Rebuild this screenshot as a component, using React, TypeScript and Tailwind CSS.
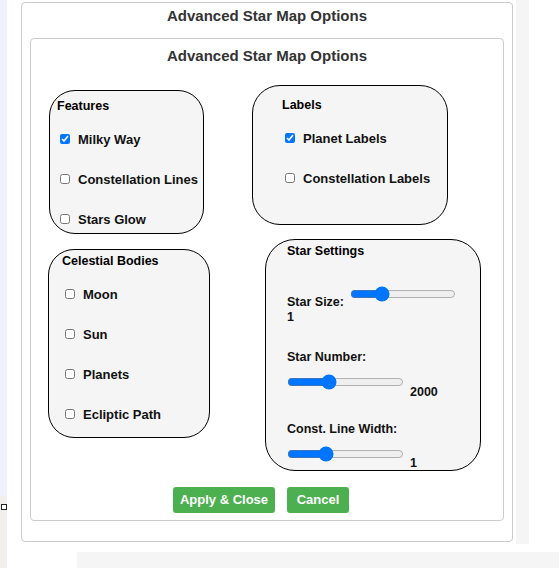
import React from "react";

const font = { fontFamily: '"Liberation Sans", Arial, sans-serif' };

function Check({ label, checked, pl }: { label: string; checked?: boolean; pl: string }) {
  return (
    <label className={`flex items-center h-[40px] ${pl}`}>
      <input
        type="checkbox"
        defaultChecked={checked}
        className="w-[10px] h-[10px] accent-[#0075ff]"
      />
      <span className="ml-[8px] text-[13px] font-bold leading-[15px] text-[#111]">{label}</span>
    </label>
  );
}

function Range({ min, max, value, width }: { min: number; max: number; value: number; width: string }) {
  return (
    <input
      type="range"
      min={min}
      max={max}
      step="any"
      defaultValue={value}
      className={`${width} h-[16px] accent-[#0075ff]`}
    />
  );
}

export default function App() {
  return (
    <div className="w-[559px] h-[568px] bg-white flex overflow-hidden" style={font}>
      {/* left page strip */}
      <div className="w-[7px] flex flex-col shrink-0">
        <div className="h-[496px] bg-[#eef2fa]" />
        <div className="flex-1 bg-[#f1efeb] pt-[8px]">
          <div className="ml-[1px] w-[6px] h-[6px] border border-[#222] bg-white" />
        </div>
      </div>

      <div className="flex flex-col flex-1">
        <div className="flex">
          {/* outer dialog */}
          <div className="ml-[14px] mt-[2px] w-[492px] h-[540px] border border-[#ccc] rounded-[4px] bg-white">
            <div className="pt-[4px] text-center text-[15px] leading-[17px] font-bold text-[#333]">
              Advanced Star Map Options
            </div>

            {/* inner dialog */}
            <div className="ml-[8px] mt-[14px] w-[474px] h-[483px] border border-[#ccc] rounded-[4px] bg-white">
              <div className="pt-[8px] text-center text-[15px] leading-[17px] font-bold text-[#333]">
                Advanced Star Map Options
              </div>

              {/* row 1 */}
              <div className="flex items-start">
                <div className="ml-[18px] mt-[26px] w-[155px] h-[144px] border border-black rounded-[26px] bg-[#f5f5f5]">
                  <div className="pl-[7px] pt-[8px] text-[12.5px] leading-[15px] font-bold text-black">Features</div>
                  <div className="mt-[5px]">
                    <Check label="Milky Way" checked pl="pl-[10px]" />
                    <Check label="Constellation Lines" pl="pl-[10px]" />
                    <Check label="Stars Glow" pl="pl-[10px]" />
                  </div>
                </div>

                <div className="ml-[48px] mt-[21px] w-[196px] h-[140px] border border-black rounded-[28px] bg-[#f5f5f5]">
                  <div className="pl-[29px] pt-[12px] text-[12.5px] leading-[15px] font-bold text-black">Labels</div>
                  <div className="mt-[5px]">
                    <Check label="Planet Labels" checked pl="pl-[32px]" />
                    <Check label="Constellation Labels" pl="pl-[32px]" />
                  </div>
                </div>
              </div>

              {/* row 2 */}
              <div className="flex items-start">
                <div className="ml-[17px] mt-[15px] w-[162px] h-[189px] border border-black rounded-[26px] bg-[#f5f5f5]">
                  <div className="pl-[13px] pt-[4px] text-[12.5px] leading-[15px] font-bold text-black">
                    Celestial Bodies
                  </div>
                  <div className="mt-[5px]">
                    <Check label="Moon" pl="pl-[16px]" />
                    <Check label="Sun" pl="pl-[16px]" />
                    <Check label="Planets" pl="pl-[16px]" />
                    <Check label="Ecliptic Path" pl="pl-[16px]" />
                  </div>
                </div>

                <div className="ml-[55px] mt-[5px] w-[216px] h-[232px] border border-black rounded-[30px] bg-[#f5f5f5] text-[12.5px] leading-[15px] font-bold text-[#111]">
                  <div className="pl-[21px] pt-[4px] text-black">Star Settings</div>

                  <div className="pl-[21px]">
                    <div className="mt-[27px] flex items-start">
                      <span className="w-[63px] mt-[9px]">Star Size:</span>
                      <Range min={0} max={100} value={27} width="w-[106px]" />
                    </div>
                    <div>1</div>

                    <div className="mt-[25px]">Star Number:</div>
                    <div className="mt-[9px] flex items-start">
                      <Range min={500} max={5000} value={2000} width="w-[117px]" />
                      <span className="ml-[6px] mt-[11px]">2000</span>
                    </div>

                    <div className="mt-[22px]">Const. Line Width:</div>
                    <div className="mt-[9px] flex items-start">
                      <Range min={0.1} max={3} value={1} width="w-[117px]" />
                      <span className="ml-[6px] mt-[10px]">1</span>
                    </div>
                  </div>
                </div>
              </div>

              {/* buttons */}
              <div className="mt-[16px] ml-[142px] flex gap-[12px]">
                <button
                  type="button"
                  className="w-[102px] h-[26px] rounded-[3px] bg-[#4caf50] text-white text-[13px] font-bold"
                >
                  Apply &amp; Close
                </button>
                <button
                  type="button"
                  className="w-[62px] h-[26px] rounded-[3px] bg-[#4caf50] text-white text-[13px] font-bold"
                >
                  Cancel
                </button>
              </div>
            </div>
          </div>

          {/* right page strip */}
          <div className="ml-[3px] w-[13px] h-[544px] bg-[#f5f5f5]" />
        </div>
        <div className="ml-[70px] mt-[8px] flex-1 bg-[#f5f5f5]" />
      </div>
    </div>
  );
}
